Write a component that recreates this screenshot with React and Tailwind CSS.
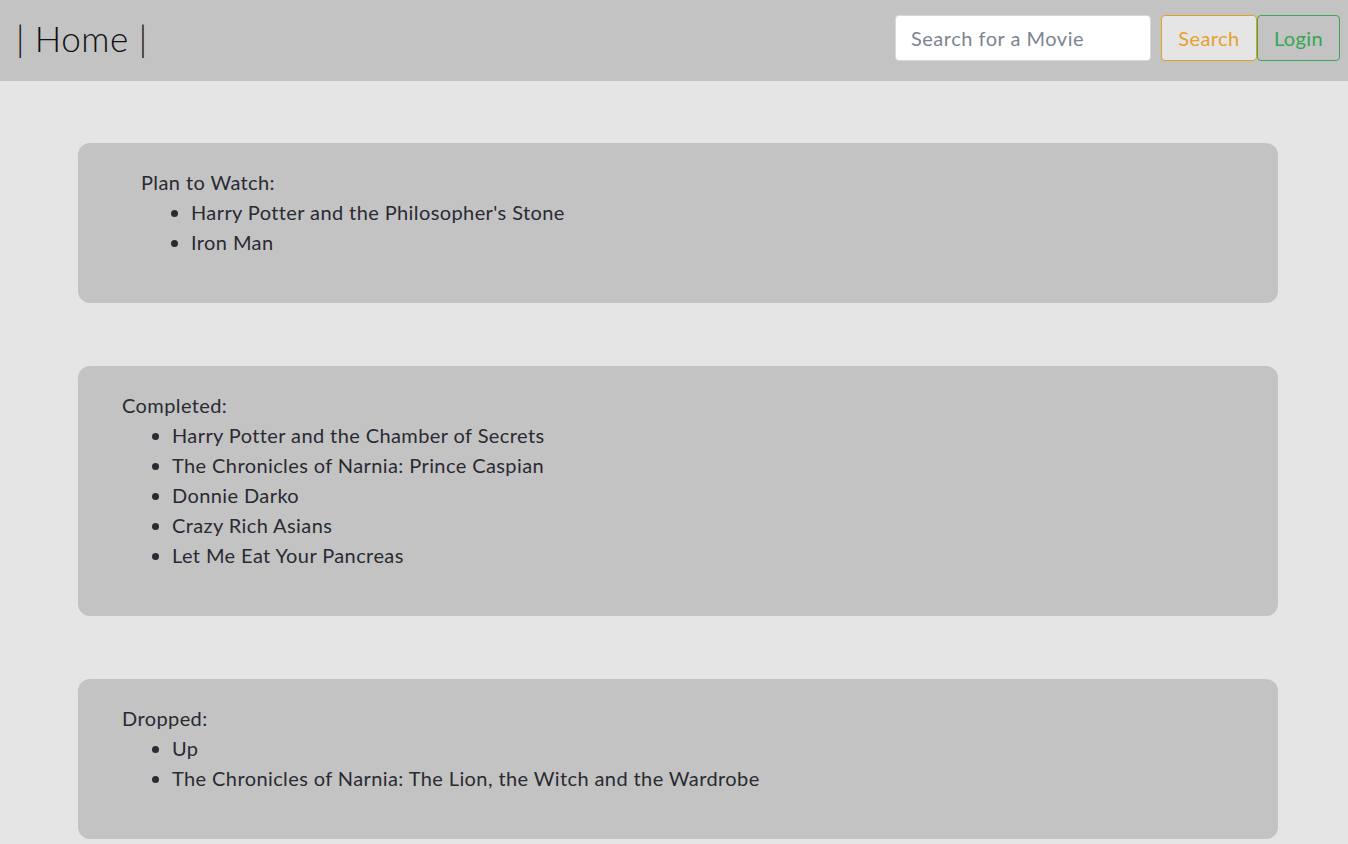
import React from 'react';

const lists = [
  { title: 'Plan to Watch:', items: ["Harry Potter and the Philosopher's Stone", 'Iron Man'], indent: 'pl-[63px]' },
  {
    title: 'Completed:',
    items: [
      'Harry Potter and the Chamber of Secrets',
      'The Chronicles of Narnia: Prince Caspian',
      'Donnie Darko',
      'Crazy Rich Asians',
      'Let Me Eat Your Pancreas',
    ],
    indent: 'pl-[44px]',
  },
  {
    title: 'Dropped:',
    items: ['Up', 'The Chronicles of Narnia: The Lion, the Witch and the Wardrobe'],
    indent: 'pl-[44px]',
  },
];

const App = () => {
  return (
    <div className="min-h-screen bg-[#e5e5e5] text-[#2a2a33]" style={{ fontFamily: 'Lato, "Open Sans", sans-serif' }}>
      <header className="h-[81px] bg-[#c3c3c3] flex items-start justify-between pl-4 pr-[8px] pt-[15px]">
        <h1 className="text-[35px] font-light text-[#111] leading-[46px] tracking-[0.5px]">| Home |</h1>
        <div className="flex items-center">
          <input
            type="text"
            placeholder="Search for a Movie"
            className="w-[256px] h-[46px] bg-white rounded-[4px] border border-[#d8d8d8] px-[15px] text-[20px] tracking-[0.5px] placeholder:text-[#7c8590] outline-none"
          />
          <button className="ml-[10px] h-[46px] w-[96px] rounded-[4px] border border-[#e0a11e] bg-[#e5e5e5] text-[20px] tracking-[0.4px] text-[#e6a12c]">
            Search
          </button>
          <button className="h-[46px] w-[83px] rounded-[4px] border border-[#3da558] text-[20px] tracking-[0.4px] text-[#38a552]">
            Login
          </button>
        </div>
      </header>

      <main className="flex flex-col gap-[63px] pl-[78px] pt-[62px] pb-[7px]">
        {lists.map((list) => (
          <section
            key={list.title}
            className={`w-[1200px] bg-[#c3c3c3] rounded-[12px] pt-[24px] pb-[46px] ${list.indent} text-[20px] leading-[30px] tracking-[0.4px]`}
          >
            <p>{list.title}</p>
            <ul className="list-disc pl-[50px]">
              {list.items.map((item) => (
                <li key={item}>{item}</li>
              ))}
            </ul>
          </section>
        ))}
      </main>
    </div>
  );
};

export default App;
